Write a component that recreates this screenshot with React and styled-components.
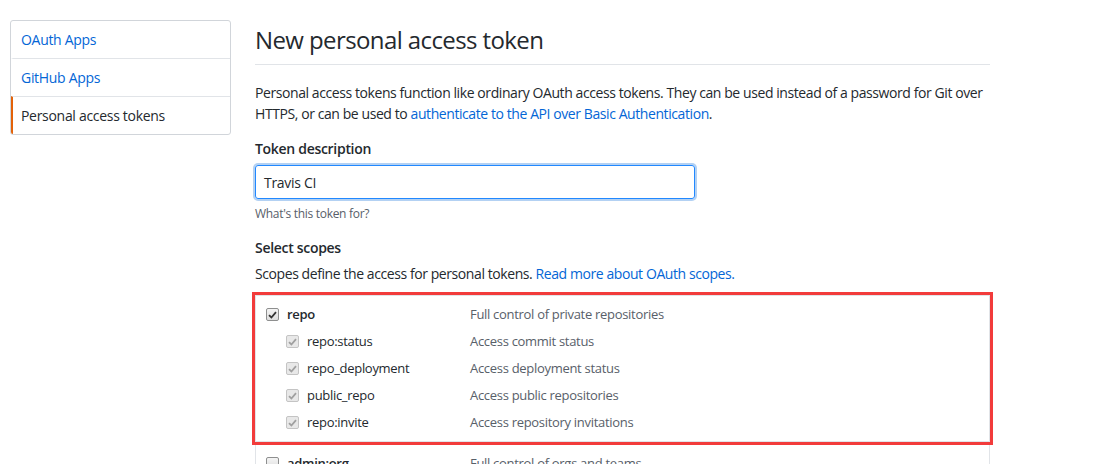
import React from "react"
import styled, { createGlobalStyle } from "styled-components"

const GlobalStyle = createGlobalStyle`
*{
  margin: 0;
  padding: 0;
  box-sizing: border-box;
}
body{
  background-color: #fff;
  font-family: "Open Sans", "Noto Sans", sans-serif;
  font-size: 14px;
  line-height: 21px;
  color: #24292e;
  letter-spacing: -0.3px;
}
`

const Page = styled.div`
display: flex;
align-items: flex-start;
gap: 24px;
padding: 20px 0 0 10px;
`

const Menu = styled.nav`
width: 221px;
border: 1px solid #d1d5da;
border-radius: 3px;
overflow: hidden;
`

const MenuItem = styled.a`
display: block;
padding: 8px 10px;
border-top: ${p => (p.first ? "none" : "1px solid #e1e4e8")};
border-left: 2px solid ${p => (p.active ? "#e36209" : "transparent")};
padding-left: 8px;
color: ${p => (p.active ? "#24292e" : "#0366d6")};
text-decoration: none;
`

const Main = styled.main`
width: 735px;
`

const Heading = styled.h1`
font-size: 24px;
font-weight: 400;
line-height: 36px;
letter-spacing: -0.6px;
padding: 2px 0 6px;
border-bottom: 1px solid #e1e4e8;
`

const Text = styled.p`
margin-top: ${p => p.top || 0}px;
letter-spacing: -0.42px;
color: #24292e;
`

const Link = styled.a`
color: #0366d6;
text-decoration: none;
`

const Label = styled.h3`
font-size: 14px;
font-weight: 600;
margin-top: ${p => p.top || 0}px;
`

const Input = styled.div`
margin-top: 6px;
width: 440px;
height: 34px;
padding: 0 8px;
display: flex;
align-items: center;
font-size: 14px;
border: 1px solid #2188ff;
border-radius: 3px;
box-shadow: 0 0 0 2px rgba(3, 102, 214, 0.3);
`

const Note = styled.p`
margin-top: 6px;
font-size: 12px;
line-height: 18px;
color: #586069;
`

const Highlight = styled.div`
margin: 8px -3px 0;
border: 3px solid #f23b3b;
`

const Group = styled.div`
border: 1px solid #e1e4e8;
border-top: ${p => (p.open ? "none" : "1px solid #e1e4e8")};
padding: ${p => (p.open ? "5px 10px 0" : "5px 10px")};
font-size: 13px;
`

const Row = styled.div`
display: grid;
grid-template-columns: 204px 1fr;
align-items: center;
height: 27px;
`

const Name = styled.label`
display: flex;
align-items: center;
gap: 8px;
padding-left: ${p => (p.child ? 20 : 0)}px;
font-weight: ${p => (p.child ? 400 : 600)};
`

const Desc = styled.span`
color: #586069;
`

const Box = styled.span`
width: 13px;
height: 13px;
flex: none;
display: inline-flex;
align-items: center;
justify-content: center;
border: 1px solid ${p => (p.disabled ? "#c4c4c4" : "#8e8f8f")};
border-radius: 2px;
background: ${p => (p.disabled ? "#e8e8e8" : "linear-gradient(#f4f4f4, #dedede)")};
`

function Check({ checked, disabled }) {
  return (
    <Box disabled={disabled}>
      {checked && (
        <svg width="9" height="8" viewBox="0 0 9 8">
          <path
            d="M1 4.2 L3.4 6.5 L8 1.2"
            fill="none"
            stroke={disabled ? "#a0a0a0" : "#333"}
            strokeWidth="1.8"
          />
        </svg>
      )}
    </Box>
  )
}

const repoScopes = [
  ["repo:status", "Access commit status"],
  ["repo_deployment", "Access deployment status"],
  ["public_repo", "Access public repositories"],
  ["repo:invite", "Access repository invitations"],
]

export default function App() {
  return (
    <>
      <GlobalStyle />
      <Page>
        <Menu>
          <MenuItem first href="#">OAuth Apps</MenuItem>
          <MenuItem href="#">GitHub Apps</MenuItem>
          <MenuItem active href="#">Personal access tokens</MenuItem>
        </Menu>
        <Main>
          <Heading>New personal access token</Heading>
          <Text top={17}>
            Personal access tokens function like ordinary OAuth access tokens. They can be used instead of a password for Git over
            HTTPS, or can be used to <Link href="#">authenticate to the API over Basic Authentication</Link>.
          </Text>
          <Label top={14}>Token description</Label>
          <Input>Travis CI</Input>
          <Note>What's this token for?</Note>
          <Label top={14}>Select scopes</Label>
          <Text top={5}>
            Scopes define the access for personal tokens. <Link href="#">Read more about OAuth scopes.</Link>
          </Text>
          <Highlight>
            <Group>
              <Row>
                <Name><Check checked />repo</Name>
                <Desc>Full control of private repositories</Desc>
              </Row>
              {repoScopes.map(([name, desc]) => (
                <Row key={name}>
                  <Name child><Check checked disabled />{name}</Name>
                  <Desc>{desc}</Desc>
                </Row>
              ))}
            </Group>
          </Highlight>
          <Group open>
            <Row>
              <Name><Check />admin:org</Name>
              <Desc>Full control of orgs and teams</Desc>
            </Row>
          </Group>
        </Main>
      </Page>
    </>
  )
}
